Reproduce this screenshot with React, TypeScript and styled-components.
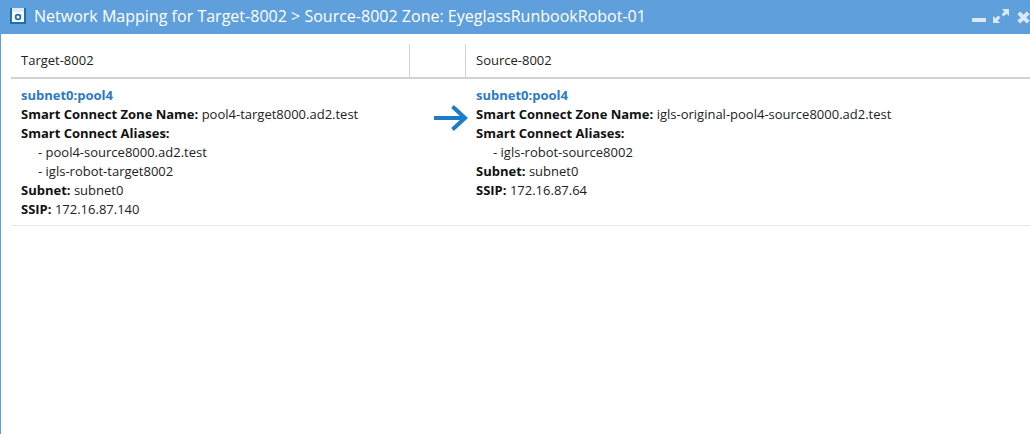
import React from 'react';
import styled, { createGlobalStyle } from 'styled-components';

const columns = [
  {
    name: 'subnet0:pool4',
    zone: 'pool4-target8000.ad2.test',
    aliases: ['pool4-source8000.ad2.test', 'igls-robot-target8002'],
    subnet: 'subnet0',
    ssip: '172.16.87.140',
  },
  {
    name: 'subnet0:pool4',
    zone: 'igls-original-pool4-source8000.ad2.test',
    aliases: ['igls-robot-source8002'],
    subnet: 'subnet0',
    ssip: '172.16.87.64',
  },
];

const Mapping = ({ item }: { item: (typeof columns)[number] }) => (
  <div>
    <PoolName>{item.name}</PoolName>
    <Line><b>Smart Connect Zone Name:</b> {item.zone}</Line>
    <Line><b>Smart Connect Aliases:</b></Line>
    {item.aliases.map((alias) => <Alias key={alias}>- {alias}</Alias>)}
    <Line><b>Subnet:</b> {item.subnet}</Line>
    <Line><b>SSIP:</b> {item.ssip}</Line>
  </div>
);

const App: React.FC = () => (
  <Window>
    <GlobalStyle />
    <TitleBar>
      <TitleIcon width="16" height="16" viewBox="0 0 16 16">
        <rect x="0" y="0" width="16" height="16" fill="#1a6fb5" />
        <rect x="2" y="0" width="12" height="4" fill="#dcebf8" />
        <rect x="2" y="4" width="12" height="10" fill="#fff" />
        <circle cx="8" cy="9" r="2.4" fill="none" stroke="#1a6fb5" strokeWidth="1.8" />
      </TitleIcon>
      <TitleText>Network Mapping for Target-8002 &gt; Source-8002 Zone: EyeglassRunbookRobot-01</TitleText>
      <WindowControls>
        <svg width="14" height="16" viewBox="0 0 14 16">
          <rect x="0" y="9" width="14" height="4" rx="0.5" fill="#dbe9f7" />
        </svg>
        <svg width="16" height="16" viewBox="0 0 16 16" fill="#dbe9f7">
          <path d="M9 0H16V7L13.6 4.8 10.8 7.6 8.6 5.4 11.3 2.4Z" />
          <path d="M7 14H0V7L2.4 9.2 5.2 6.4 7.4 8.6 4.7 11.6Z" />
        </svg>
        <svg width="14" height="16" viewBox="0 0 14 16">
          <path d="M2.8 3.8L12.2 13.2M12.2 3.8L2.8 13.2" stroke="#dbe9f7" strokeWidth="4" />
        </svg>
      </WindowControls>
    </TitleBar>
    <Table>
      <HeaderRow>
        <HeaderCell>Target-8002</HeaderCell>
        <HeaderCell />
        <HeaderCell $last>Source-8002</HeaderCell>
      </HeaderRow>
      <BodyRow>
        <BodyCell><Mapping item={columns[0]} /></BodyCell>
        <ArrowCell>
          <svg width="34" height="26" viewBox="0 0 34 26">
            <path d="M0 13H30M18.5 1.5L31 13L18.5 24.5" fill="none" stroke="#1b7dc8" strokeWidth="4" />
          </svg>
        </ArrowCell>
        <BodyCell><Mapping item={columns[1]} /></BodyCell>
      </BodyRow>
    </Table>
  </Window>
);

const GlobalStyle = createGlobalStyle`
  html, body {
    margin: 0;
    background: #fff;
    overflow: hidden;
  }
  * {
    box-sizing: border-box;
  }
`;

const Window = styled.div`
  width: 1030px;
  height: 434px;
  border-left: 1px solid #5b9fdd;
  font-family: "Open Sans", sans-serif;
  font-size: 13px;
  color: #222;
  background: #fff;
`;

const TitleBar = styled.div`
  display: flex;
  align-items: center;
  height: 34px;
  margin-left: -1px;
  padding: 0 0 0 10px;
  background: #5f9fdc;
  color: #fff;
`;

const TitleIcon = styled.svg`
  flex: none;
  margin: -2px 8px 0 0;
`;

const TitleText = styled.div`
  flex: 1;
  font-size: 16px;
  letter-spacing: 0.013px;
  white-space: nowrap;
  margin-top: -2px;
`;

const WindowControls = styled.div`
  display: flex;
  align-items: center;
  gap: 7px;
`;

const Table = styled.div`
  margin: 10px 0 0 10px;
  display: grid;
  grid-template-columns: 399px 56px 1fr;
`;

const HeaderRow = styled.div`
  display: contents;
`;

const HeaderCell = styled.div<{ $last?: boolean }>`
  height: 33px;
  padding: 0 10px;
  line-height: 33px;
  border-bottom: 2px solid #d2d2d2;
  box-sizing: content-box;
  border-right: ${({ $last }) => ($last ? 'none' : '1px solid #d2d2d2')};
`;

const BodyRow = styled.div`
  display: contents;
`;

const BodyCell = styled.div`
  height: 147px;
  padding: 7px 10px 0;
  border-bottom: 1px solid #e6e6e6;
`;

const ArrowCell = styled.div`
  height: 147px;
  padding: 26px 0 0 24px;
  border-bottom: 1px solid #e6e6e6;
`;

const PoolName = styled.div`
  font-weight: 700;
  line-height: 19px;
  color: #2c7bc4;
`;

const Line = styled.div`
  line-height: 19px;
  b {
    color: #111;
  }
`;

const Alias = styled.div`
  line-height: 19px;
  padding-left: 17px;
`;

export default App;
